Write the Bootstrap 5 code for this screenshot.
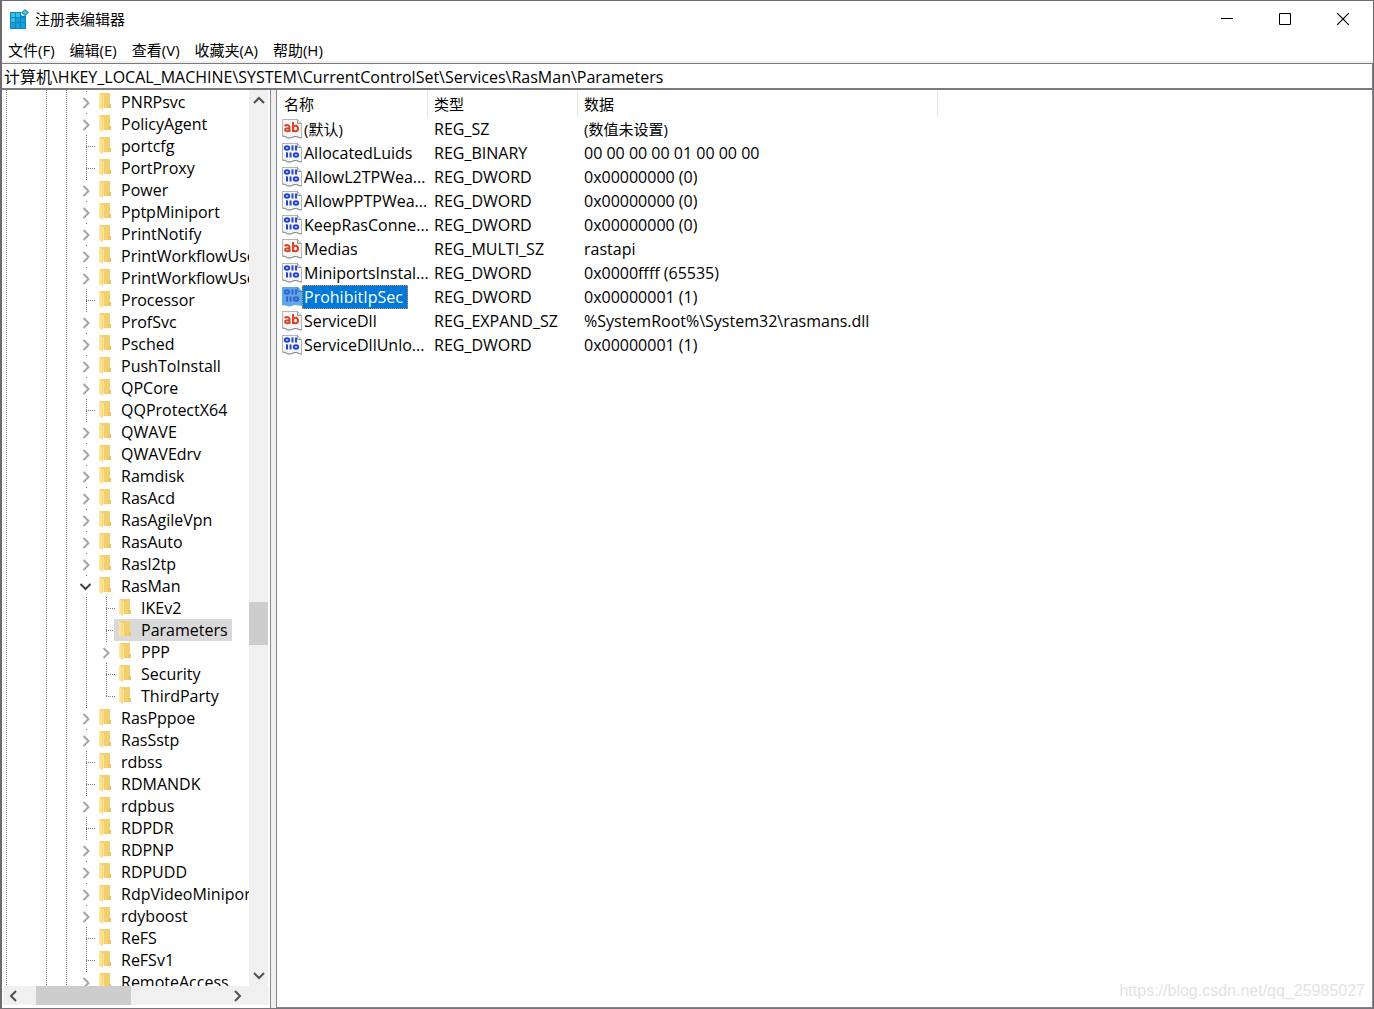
<!DOCTYPE html>
<html lang="zh-CN">
<head>
<meta charset="utf-8">
<meta name="viewport" content="width=device-width, initial-scale=1">
<title>注册表编辑器</title>
<link href="https://cdn.jsdelivr.net/npm/bootstrap@5.3.0/dist/css/bootstrap.min.css" rel="stylesheet">
<style>
  body { font-family: "Open Sans", "Noto Sans CJK SC", sans-serif; font-size: 15px; line-height: 22px; color: #000; background: #fff; }
  button { font: inherit; color: inherit; background: none; border: 0; padding: 0; }
  a, a:hover { color: inherit; text-decoration: none; }
  svg { display: block; flex: none; }
  .app-window { border: 1px solid #6d6b6f; border-left-width: 2px; border-bottom-color: #77757b; }
  .title-bar { height: 36px; padding: 0 1px 0 7px; }
  .app-name { margin-left: 6px; }
  .win-btn { width: 58px; height: 36px; display: flex; align-items: center; justify-content: center; }
  .menu-bar { height: 24px; padding: 2px 6px 0; gap: 15px; }
  .address-wrap { border-top: 2px solid #f0f0f0; }
  .address-box { height: 27px; border: 1px solid #7c7a80; border-left: 0; border-bottom-width: 2px; padding: 0 2px 1px; outline: 0; color: #000; font-size: 16px; }
  .tree-pane { width: 269px; border-right: 1px solid #828790; }
  .splitter { width: 5px; background: #f0f0f0; }
  .list-pane { border-left: 1px solid #828790; border-right: 1px solid #828790; border-bottom: 1px solid #828790; }
  .tree-view { overflow: hidden; padding-top: 1px; flex: 1 1 0; font-size: 16px; background: linear-gradient(#7a7a7a 50%, transparent 50%) 4px 0 / 1px 2px repeat-y, linear-gradient(#7a7a7a 50%, transparent 50%) 44px 0 / 1px 2px repeat-y, linear-gradient(#7a7a7a 50%, transparent 50%) 64px 0 / 1px 2px repeat-y; }
  .tree-view ul { list-style: none; margin: 0; padding: 0; }
  .tree-root > li { padding-left: 76px; background: linear-gradient(#7a7a7a 50%, transparent 50%) 84px 0 / 1px 2px repeat-y; }
  .tree-view ul ul { padding-left: 20px; }
  .tree-root ul > li { background: linear-gradient(#7a7a7a 50%, transparent 50%) 8px 0 / 1px 2px repeat-y; }
  .tree-root ul > li:last-child { background: linear-gradient(#fff, #fff) 8px 12px / 1px 10px no-repeat, linear-gradient(#7a7a7a 50%, transparent 50%) 8px 0 / 1px 2px repeat-y; }
  .node-row { display: flex; height: 22px; white-space: nowrap; }
  .node-toggle { width: 16px; height: 20px; margin: 1px 0; padding: 2px 0; background: #fff; flex: none; }
  .leaf-stub { width: 9px; height: 1px; margin: 11px -1px 0 8px; flex: none; background: linear-gradient(90deg, #7a7a7a 50%, transparent 50%) 0 0 / 2px 1px; }
  .node-link { display: flex; align-items: center; gap: 9px; padding: 0 4px 0 5px; }
  .node-link.is-current { background: #d9d9d9; }
  .v-scroll { width: 19px; background: #f0f0f0; margin-right: 2px; }
  .v-scroll .space-before { flex: 492 1 0; }
  .v-scroll .space-after { flex: 321 1 0; }
  .v-thumb { flex: 43 1 0; background: #cdcdcd; }
  .h-scroll { height: 19px; background: #f0f0f0; margin: 0 1px 3px 1px; padding-right: 22px; }
  .h-thumb { width: 95px; margin-left: 14px; background: #cdcdcd; }
  .scroll-btn { width: 19px; height: 20px; display: flex; align-items: center; justify-content: center; }
  .values-table { table-layout: fixed; width: 660px; margin: 1px 0 0 1px; border-collapse: separate; border-spacing: 0; font-size: 16px; }
  .values-table th { font-weight: 400; font-size: 15px; height: 26px; padding: 0 0 0 6px; border-right: 1px solid #e5e5e5; }
  .values-table td { height: 24px; padding: 0 0 0 6px; white-space: nowrap; }
  .values-table td:first-child { padding-left: 4px; }
  .values-table .han { font-size: 15px; }
  .value-name { display: flex; align-items: center; }
  .value-name span { padding: 0 2px; height: 24px; line-height: 24px; }
  .value-name.is-picked span { background: #0078d7; color: #fff; border: 1px dotted #f08a2c; padding: 0 4px 0 1px; line-height: 22px; }
  .stamp { right: 8px; bottom: 6px; font: 16px/22px "Liberation Sans", sans-serif; color: #e3e3e3; }
</style>
</head>
<body>
<svg width="0" height="0" class="position-absolute" aria-hidden="true">
  <defs>
    <linearGradient id="gold" x1="0" x2="1"><stop offset="0" stop-color="#ffe9a6"/><stop offset="1" stop-color="#f9d878"/></linearGradient>
    <symbol id="folder" viewBox="0 0 13 18"><path d="M1 0h10v11h1v4H1z" fill="#f3cf70"/><path d="M9 11h3v4H9z" fill="#eec465"/><path d="M0 0l4 2v15l-4-2z" fill="url(#gold)"/><path d="M4.500 2v13" stroke="#fbe3a0"/></symbol>
    <symbol id="closed" viewBox="0 0 16 16"><path d="M5.500 4l5 5-5 5" fill="none" stroke="#a6a6a6" stroke-width="2"/></symbol>
    <symbol id="opened" viewBox="0 0 16 16"><path d="M2.500 6l5 5 5-5" fill="none" stroke="#404040" stroke-width="2"/></symbol>
    <symbol id="sheet" viewBox="0 0 20 20"><path d="M.5.500h15l4 4v14.500c-3 0-4-2-7-1.500s-3 2-6 1.500-3-2-6-1.500z" fill="#f6f6f8" stroke="#b5b5b5"/><path d="M15.500.500v4h4" fill="#ddd" stroke="#999"/><path d="M1 17c3 0 3 1.500 6 2s3-1.500 6-1.500 4 1.500 6.500 1.500" fill="none" stroke="#8b8b8b"/></symbol>
    <symbol id="string" viewBox="0 0 20 20"><use href="#sheet"/><g fill="none" stroke="#d9482b" stroke-width="2"><path d="M2.500 7c1.500-1.300 5-1.300 5 1.200V13M7.500 9.200C5 9 3 9.500 3 11s3 1.800 4.500 0M11 3v10"/><ellipse cx="13.500" cy="9.500" rx="2.500" ry="2.800"/></g></symbol>
    <symbol id="bits" viewBox="0 0 20 20"><g fill="none" stroke="#2446d0" stroke-width="2"><ellipse cx="5" cy="5" rx="2.200" ry="1.700"/><path d="M10.500 2.500v5M14 2.500v5M5 9.500v5M8.500 9.500v5M9.500 3.200h1M4 10.200h1"/><ellipse cx="14" cy="12" rx="2.200" ry="1.700"/></g></symbol>
    <symbol id="binary" viewBox="0 0 20 20"><use href="#sheet"/><use href="#bits"/></symbol>
    <symbol id="binary-picked" viewBox="0 0 20 20"><path d="M0 0h16l4 4v15c-3 0-4-1-7-1s-3 2-6 1.500-3-2-7-1z" fill="#60a9e3"/><path d="M15.500 0v4.500H20" fill="none" stroke="#3d80b8"/><g opacity=".7"><use href="#bits"/></g></symbol>
  </defs>
</svg>
<div class="app-window d-flex flex-column vh-100 position-relative overflow-hidden">
  <header class="title-bar d-flex align-items-center">
    <svg width="20" height="20" viewBox="0 0 20 20" aria-hidden="true"><path d="M1 3h16v17H1z" fill="#0785bd"/><path fill="#35bdec" d="M2 4h4v4H2zM7 4h4v4H7zM2 9h4v4H2z"/><path fill="#169fd8" d="M7 9h4v4H7zM2 14h4v5H2zM7 14h4v5H7zM12 9h4v4h-4zM12 14h4v5h-4z"/><path d="M12 0h8v7h-8z" fill="#fff"/><path d="M12 6l2 1h-2z" fill="#0785bd"/><path d="M16 0l4 3.500-4 4-4-4z" fill="#2498cc"/><path d="M16 1.500l2 2-2 2-2-2z" fill="#5bbfe6"/></svg>
    <span class="app-name flex-grow-1">注册表编辑器</span>
    <button class="win-btn" aria-label="最小化"><svg width="12" height="12"><path d="M0 5.500h12" stroke="#000"/></svg></button>
    <button class="win-btn" aria-label="最大化"><svg width="12" height="12"><path d="M.5.500h11v11H.5z" fill="none" stroke="#000"/></svg></button>
    <button class="win-btn" aria-label="关闭"><svg width="12" height="12"><path d="M0 0l12 12M12 0L0 12" stroke="#000" stroke-width="1.200"/></svg></button>
  </header>
  <nav class="menu-bar d-flex align-items-center" aria-label="菜单">
    <button>文件(F)</button><button>编辑(E)</button><button>查看(V)</button><button>收藏夹(A)</button><button>帮助(H)</button>
  </nav>
  <div class="address-wrap"><input class="address-box d-block w-100" type="text" aria-label="地址" value="计算机\HKEY_LOCAL_MACHINE\SYSTEM\CurrentControlSet\Services\RasMan\Parameters"></div>
  <main class="d-flex flex-grow-1 overflow-hidden">
    <aside class="tree-pane d-flex flex-column flex-shrink-0">
      <div class="d-flex flex-grow-1 overflow-hidden">
        <div class="tree-view"><ul class="tree-root" id="tree"></ul></div>
        <div class="v-scroll d-flex flex-column">
          <button class="scroll-btn" aria-label="向上滚动"><svg width="12" height="8"><path d="M1 7l5-5 5 5" fill="none" stroke="#505050" stroke-width="2"/></svg></button>
          <div class="space-before"></div><div class="v-thumb"></div><div class="space-after"></div>
          <button class="scroll-btn" aria-label="向下滚动"><svg width="12" height="8"><path d="M1 1l5 5 5-5" fill="none" stroke="#505050" stroke-width="2"/></svg></button>
        </div>
      </div>
      <div class="h-scroll d-flex">
        <button class="scroll-btn" aria-label="向左滚动"><svg width="8" height="12"><path d="M7 1L2 6l5 5" fill="none" stroke="#505050" stroke-width="2"/></svg></button>
        <div class="h-thumb"></div>
        <button class="scroll-btn ms-auto" aria-label="向右滚动"><svg width="8" height="12"><path d="M1 1l5 5-5 5" fill="none" stroke="#505050" stroke-width="2"/></svg></button>
      </div>
    </aside>
    <div class="splitter flex-shrink-0"></div>
    <section class="list-pane flex-grow-1 overflow-hidden">
      <table class="values-table">
        <colgroup><col style="width:150px"><col style="width:150px"><col style="width:360px"></colgroup>
        <thead><tr><th scope="col">名称</th><th scope="col">类型</th><th scope="col">数据</th></tr></thead>
        <tbody id="values"></tbody>
      </table>
    </section>
  </main>
  <div class="stamp position-absolute">https://blog.csdn.net/qq_25985027</div>
</div>
<script>
  // "+" marks a closed branch, "-" an open one; plain names are leaves
  const keys = ["+PNRPsvc", "+PolicyAgent", "portcfg", "PortProxy", "+Power", "+PptpMiniport", "+PrintNotify",
    "+PrintWorkflowUserSvc", "+PrintWorkflowUserSvc", "Processor", "+ProfSvc", "+Psched", "+PushToInstall", "+QPCore",
    "QQProtectX64", "+QWAVE", "+QWAVEdrv", "+Ramdisk", "+RasAcd", "+RasAgileVpn", "+RasAuto", "+Rasl2tp",
    ["-RasMan", "IKEv2", "Parameters", "+PPP", "Security", "ThirdParty"],
    "+RasPppoe", "+RasSstp", "rdbss", "RDMANDK", "+rdpbus", "RDPDR", "+RDPNP", "+RDPUDD", "+RdpVideoMiniport",
    "+rdyboost", "ReFS", "ReFSv1", "+RemoteAccess"];
  const node = key => {
    const [head, ...children] = [].concat(key);
    const name = head.replace(/^[+-]/, "");
    const lead = name === head ? '<span class="leaf-stub"></span>'
      : `<button class="node-toggle" aria-label="${name}"><svg width="16" height="16"><use href="#${head[0] === "+" ? "closed" : "opened"}"/></svg></button>`;
    return `<li><div class="node-row">${lead}<a href="#" class="node-link${name === "Parameters" ? " is-current" : ""}"><svg width="13" height="18"><use href="#folder"/></svg>${name}</a></div>${children.length ? `<ul>${children.map(node).join("")}</ul>` : ""}</li>`;
  };
  document.getElementById("tree").innerHTML = keys.map(node).join("");

  const values = [
    ["string", "(默认)", "REG_SZ", "(数值未设置)"],
    ["binary", "AllocatedLuids", "REG_BINARY", "00 00 00 00 01 00 00 00"],
    ["binary", "AllowL2TPWea...", "REG_DWORD", "0x00000000 (0)"],
    ["binary", "AllowPPTPWea...", "REG_DWORD", "0x00000000 (0)"],
    ["binary", "KeepRasConne...", "REG_DWORD", "0x00000000 (0)"],
    ["string", "Medias", "REG_MULTI_SZ", "rastapi"],
    ["binary", "MiniportsInstal...", "REG_DWORD", "0x0000ffff (65535)"],
    ["binary-picked", "ProhibitIpSec", "REG_DWORD", "0x00000001 (1)"],
    ["string", "ServiceDll", "REG_EXPAND_SZ", "%SystemRoot%\\System32\\rasmans.dll"],
    ["binary", "ServiceDllUnlo...", "REG_DWORD", "0x00000001 (1)"]
  ];
  const han = text => /[\u4e00-\u9fff]/.test(text) ? "han" : "latin";
  document.getElementById("values").innerHTML = values.map(([icon, name, type, data]) =>
    `<tr><td class="${han(name)}"><div class="value-name${icon === "binary-picked" ? " is-picked" : ""}"><svg width="20" height="20"><use href="#${icon}"/></svg><span>${name}</span></div></td><td>${type}</td><td class="${han(data)}">${data}</td></tr>`).join("");
</script>
<script src="https://cdn.jsdelivr.net/npm/bootstrap@5.3.0/dist/js/bootstrap.bundle.min.js"></script>
</body>
</html>
